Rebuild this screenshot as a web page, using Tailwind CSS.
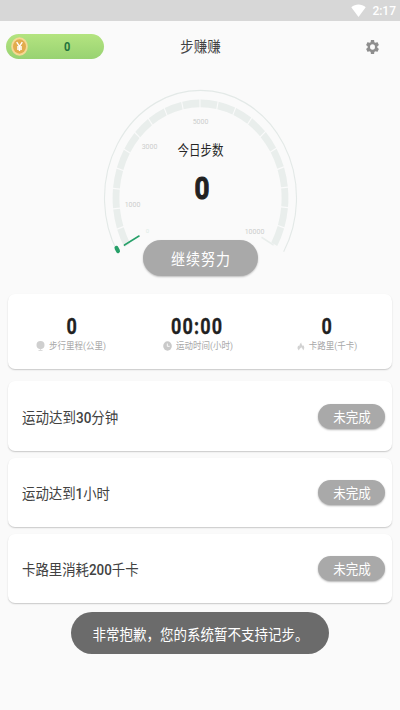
<!DOCTYPE html>
<html lang="zh-CN">
<head>
<meta charset="utf-8">
<title>步赚赚</title>
<script src="https://cdn.jsdelivr.net/npm/@tailwindcss/browser@4"></script>
</head>
<body class="relative flex h-[710px] w-[400px] flex-col overflow-hidden bg-[#fafafa] font-[Roboto,'Noto_Sans_CJK_SC',sans-serif] text-[#424242]">
  <div class="flex h-[21px] shrink-0 items-center justify-end gap-[6px] bg-[#d7d7d7] pr-[4px] text-white">
    <svg class="h-[14px] w-[15px]" viewBox="0 0 15 14"><path d="M.3 3.2C4.5-.4 10.500-.4 14.700 3.200L7.500 13Z" fill="currentColor"/></svg>
    <span class="inline-block scale-y-[1.12] text-[12px] leading-none font-medium">2:17</span>
  </div>

  <header class="grid h-[51px] shrink-0 grid-cols-3 items-center pr-[20px] pl-[6px]">
    <div class="flex h-[25px] w-[98px] items-center rounded-full bg-linear-to-b from-[#b4e480] to-[#98d272] pl-[5px]">
      <svg class="h-[19px] w-[17px]" viewBox="0 0 17 19">
        <ellipse cx="8.500" cy="9.500" rx="8.300" ry="9.200" fill="#f6d894"/>
        <ellipse cx="8.500" cy="9.500" rx="6.500" ry="7.200" fill="#e2ac4d"/>
        <path d="M5.700 5.200 8.500 9.300 11.300 5.200M8.500 9v5M6 10h5M6 12h5" fill="none" stroke="#fff" stroke-width="1.400"/>
      </svg>
      <span class="ml-[36px] inline-block scale-y-[1.2] text-[11px] leading-none font-bold text-[#23733d]">0</span>
    </div>
    <h1 class="ml-[15px] scale-y-[1.12] pt-px text-center text-[13.500px] leading-none whitespace-nowrap">步赚赚</h1>
    <svg class="mr-[1px] h-[14px] w-[13px] justify-self-end" viewBox="2 2 20 20" preserveAspectRatio="none" fill="#8e8e8e"><path d="M19.430 12.980c.040-.320.070-.640.070-.980s-.030-.660-.070-.980l2.110-1.650c.190-.150.240-.420.120-.640l-2-3.460c-.120-.220-.390-.300-.610-.220l-2.490 1c-.520-.400-1.080-.730-1.690-.980l-.380-2.650C14.460 2.180 14.250 2 14 2h-4c-.250 0-.460.180-.490.420l-.380 2.650c-.610.250-1.170.590-1.690.980l-2.490-1c-.230-.090-.490 0-.610.220l-2 3.460c-.130.220-.070.490.120.640l2.110 1.650c-.040.320-.070.650-.070.980s.030.660.070.980l-2.110 1.650c-.190.150-.240.420-.120.640l2 3.460c.120.220.390.300.610.220l2.490-1c.520.400 1.080.730 1.690.980l.380 2.650c.030.240.240.420.490.420h4c.250 0 .460-.180.490-.420l.380-2.650c.610-.250 1.170-.590 1.690-.980l2.490 1c.230.090.490 0 .610-.220l2-3.460c.120-.220.070-.490-.120-.640l-2.110-1.650zM12 15.800a3.800 3.800 0 1 1 0-7.600 3.800 3.800 0 0 1 0 7.600z"/></svg>
  </header>

  <section class="flex h-[222px] shrink-0 flex-col items-center">
    <svg class="h-[168px] w-[400px] shrink-0" viewBox="0 72 400 168" overflow="visible">
      <g transform="translate(200.500 198) scale(1 1.120)" fill="none">
        <path d="M-83.140 48A96 96 0 1 1 83.140 48" stroke="#e3e9e7" stroke-width="1.100"/>
        <path d="M-73.180 42.250A84.500 84.500 0 1 1 73.180 42.250" stroke="#e9eeec" stroke-width="6.800" pathLength="2000" stroke-dasharray="94 6"/>
        <path d="M73 42 61 35" stroke="#e9eeec" stroke-width="1.500"/>
        <path d="M-76 42 -61.500 34" stroke="#26a069" stroke-width="1.600" stroke-linecap="round"/>
        <path d="M-84 44.700 -82.500 47.300" stroke="#26a069" stroke-width="4" stroke-linecap="round"/>
      </g>
      <g fill="#cccecd" font-size="7" text-anchor="middle">
        <text x="200.500" y="123.500">5000</text>
        <text x="149.500" y="148.500">3000</text>
        <text x="132.500" y="207">1000</text>
        <text x="147.500" y="233" fill="#e0ece6" font-size="6">0</text>
        <text x="254.500" y="233.500">10000</text>
      </g>
      <text transform="translate(200.500 154.500) scale(1 1.150)" text-anchor="middle" font-size="11.500" fill="#252525">今日步数</text>
      <text transform="translate(202 199) scale(.840 1.020)" text-anchor="middle" font-size="31" font-weight="700" fill="#212121" stroke="#212121" stroke-width="1">0</text>
    </svg>
    <button class="flex h-[36px] w-[115px] shrink-0 items-center justify-center rounded-full bg-[#a9a9a9] text-white shadow-[0_1px_2px_rgba(0,0,0,0.25)]"><span class="scale-y-[1.1] pt-px pl-[2px] text-[14px] leading-none tracking-[1px]">继续努力</span></button>
  </section>

  <main class="flex flex-col px-[8px]">
    <section class="mb-[12px] grid h-[75px] grid-cols-3 rounded-[7px] bg-white pt-[24px] shadow-[0_1px_1.500px_rgba(0,0,0,0.2)]">
      <div class="flex flex-col items-center">
        <b class="scale-x-[0.9] scale-y-[1.08] text-[20px] leading-[16px] text-[#212121] [-webkit-text-stroke:0.3px_#212121]">0</b>
        <div class="mt-[6px] mr-[2px] flex items-center gap-[4px] text-[8.500px] leading-[12px] text-[#a8a8a8]">
          <svg class="h-[10px] w-[9px]" viewBox="0 0 9 10" fill="#cfcfcf"><ellipse cx="4.500" cy="4" rx="4" ry="3.900"/><path d="M3 7h3L4.500 9ZM2.500 9h4v.8h-4Z"/></svg>
          <span class="scale-y-[1.12]">步行里程(公里)</span>
        </div>
      </div>
      <div class="flex flex-col items-center">
        <b class="-ml-[5px] scale-x-[0.9] scale-y-[1.08] text-[20px] leading-[16px] tracking-[1.3px] text-[#212121] [-webkit-text-stroke:0.3px_#212121]">00:00</b>
        <div class="mt-[6px] mr-[4px] flex items-center gap-[4px] text-[8.500px] leading-[12px] text-[#a8a8a8]">
          <svg class="h-[10px] w-[9px]" viewBox="0 0 9 10"><ellipse cx="4.500" cy="5" rx="4.300" ry="4.700" fill="#c9c9c9"/><path d="M4.300 2.500V5.300H6.700" fill="none" stroke="#fff" stroke-width=".9"/></svg>
          <span class="scale-y-[1.12]">运动时间(小时)</span>
        </div>
      </div>
      <div class="flex flex-col items-center">
        <b class="-ml-[2px] scale-x-[0.9] scale-y-[1.08] text-[20px] leading-[16px] text-[#212121] [-webkit-text-stroke:0.3px_#212121]">0</b>
        <div class="mt-[6px] mr-[2px] flex items-center gap-[4px] text-[8.500px] leading-[12px] text-[#a8a8a8]">
          <svg class="h-[9px] w-[8px]" viewBox="0 0 8 9"><path d="M2 8.500C-.3 6.500.500 4.500 1.500 3.500L2.200 4.500C2.500 2.500 3.200 1.500 4.200.500 4.200 2.300 5.200 2.600 5.500 4L6.300 3.200C7.800 5 7.500 7 6 8.500 6 6.500 4.800 6.500 4.200 5 3.800 6.500 2.200 6.500 2 8.500Z" fill="#d2d2d2"/></svg>
          <span class="scale-y-[1.12]">卡路里(千卡)</span>
        </div>
      </div>
    </section>

    <section class="mb-[7px] flex h-[70px] items-center justify-between rounded-[7px] bg-white pr-[7px] pl-[14px] shadow-[0_1px_1.500px_rgba(0,0,0,0.2)]">
      <span class="scale-y-[1.12] pt-[3px] text-[13.500px] leading-none">运动达到<span class="font-medium">30</span>分钟</span>
      <button class="flex h-[25px] w-[67px] items-center justify-center rounded-full bg-[#a9a9a9] text-white shadow-[0_1px_2px_rgba(0,0,0,0.3)]"><span class="scale-y-[1.12] pt-[3px] pl-px text-[12.500px] leading-none">未完成</span></button>
    </section>
    <section class="mb-[7px] flex h-[69px] items-center justify-between rounded-[7px] bg-white pr-[7px] pl-[14px] shadow-[0_1px_1.500px_rgba(0,0,0,0.2)]">
      <span class="scale-y-[1.12] pt-[2px] text-[13.400px] leading-none">运动达到<span class="font-medium">1</span>小时</span>
      <button class="flex h-[25px] w-[67px] items-center justify-center rounded-full bg-[#a9a9a9] text-white shadow-[0_1px_2px_rgba(0,0,0,0.3)]"><span class="scale-y-[1.12] pt-[2px] pl-px text-[12.500px] leading-none">未完成</span></button>
    </section>
    <section class="flex h-[69px] items-center justify-between rounded-[7px] bg-white pr-[7px] pl-[14px] shadow-[0_1px_1.500px_rgba(0,0,0,0.2)]">
      <span class="scale-y-[1.12] pt-[2px] text-[13.400px] leading-none">卡路里消耗<span class="font-medium">200</span>千卡</span>
      <button class="flex h-[25px] w-[67px] items-center justify-center rounded-full bg-[#a9a9a9] text-white shadow-[0_1px_2px_rgba(0,0,0,0.3)]"><span class="scale-y-[1.12] pt-[2px] pl-px text-[12.500px] leading-none">未完成</span></button>
    </section>
  </main>

  <div class="absolute top-[612px] left-[71px] flex h-[42px] w-[258px] items-center justify-center rounded-full bg-[#6b6b6b] text-white"><span class="scale-y-[1.12] pt-[3px] pl-px text-[13.500px] leading-none whitespace-nowrap">非常抱歉，您的系统暂不支持记步。</span></div>
</body>
</html>
